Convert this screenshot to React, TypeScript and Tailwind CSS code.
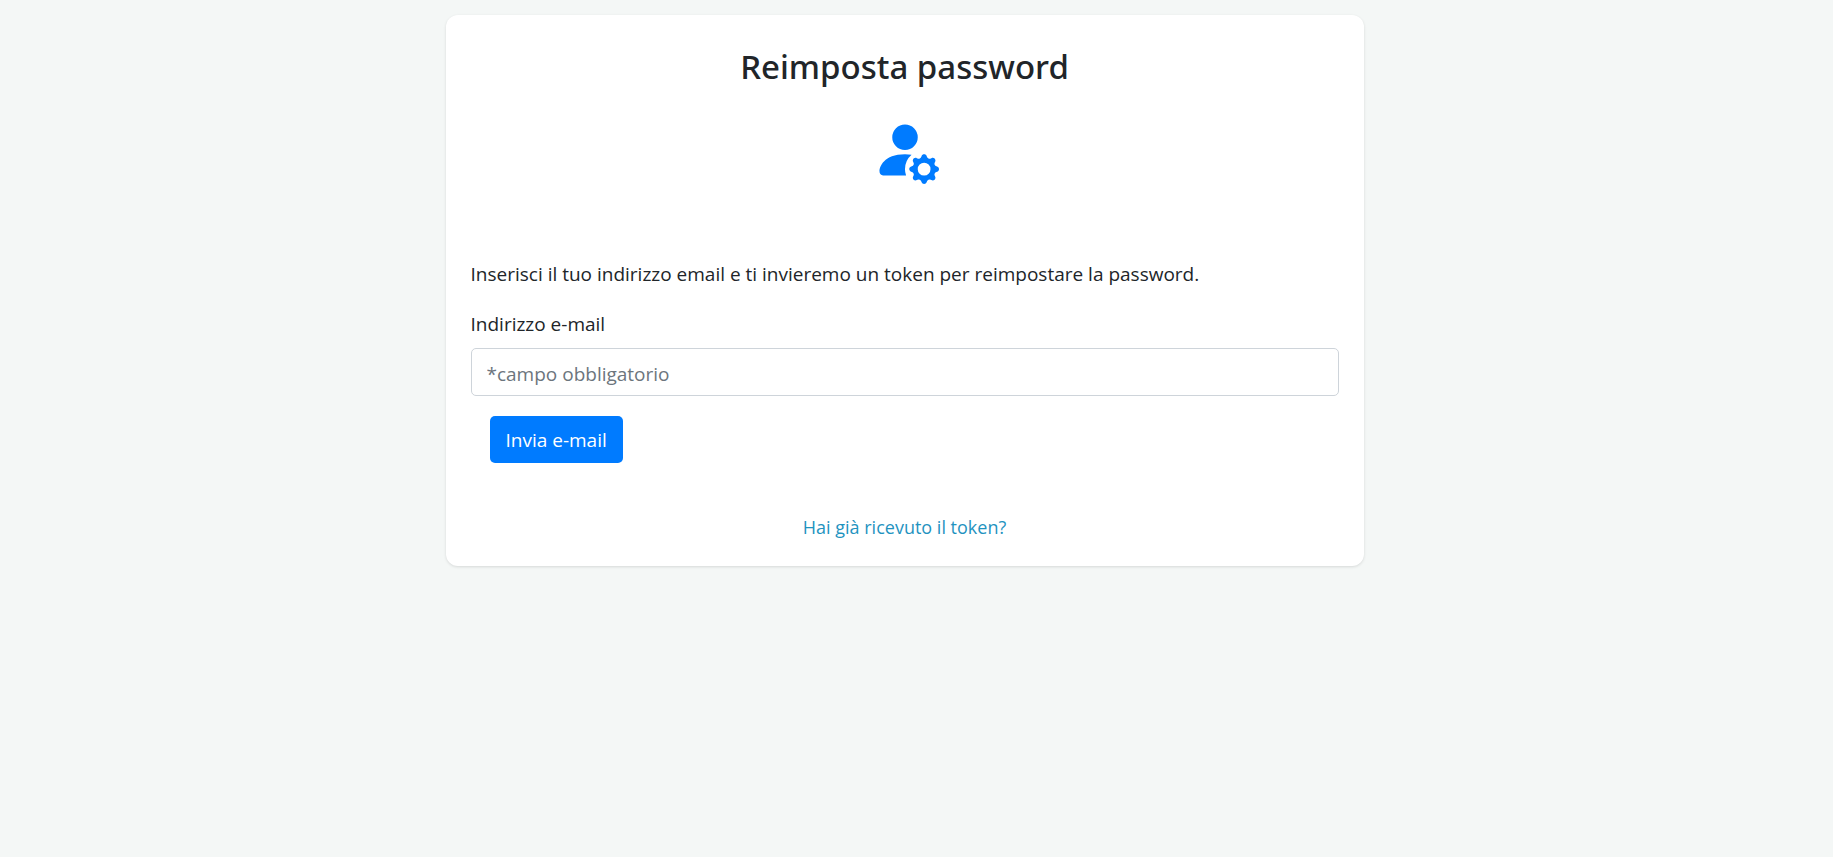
import { BsPersonFillGear } from "react-icons/bs";

export default function App() {
  return (
    <div className="min-h-screen bg-[#f4f7f6] py-[15px] pr-10 pl-4 font-['Open_Sans','Noto_Sans',sans-serif] text-[19px] leading-[30px] text-[#212529]">
      <main className="mx-auto w-full max-w-[918px] rounded-xl bg-white px-[25px] pt-[29px] pb-6 shadow-[0_1px_3px_rgba(0,0,0,0.12)]">
        <h1 className="text-center font-['Noto_Sans','Open_Sans',sans-serif] text-[33px] leading-[46px] font-medium">
          Reimposta password
        </h1>
        <div className="mt-[26px] flex justify-center">
          <BsPersonFillGear className="size-[68px] text-[#007bff]" aria-hidden="true" />
        </div>
        <p className="mt-[75px]">
          Inserisci il tuo indirizzo email e ti invieremo un token per reimpostare la password.
        </p>
        <form className="mt-5" onSubmit={(event) => event.preventDefault()}>
          <label htmlFor="email" className="block">
            Indirizzo e-mail
          </label>
          <input
            id="email"
            name="email"
            type="email"
            required
            placeholder="*campo obbligatorio"
            className="mt-[9px] block h-12 w-full rounded-[5px] border border-[#ced4da] bg-white px-[15px] pt-[3px] placeholder:text-[#6c757d] placeholder:opacity-100"
          />
          <button
            type="submit"
            className="mt-5 ml-[19px] block h-[47px] rounded-[5px] bg-[#007bff] px-4 text-white"
          >
            Invia e-mail
          </button>
        </form>
        <div className="mt-[49px] text-center text-[18px] leading-[30px]">
          <a href="#token" className="text-[#1f93bf]">
            Hai già ricevuto il token?
          </a>
        </div>
      </main>
    </div>
  );
}
